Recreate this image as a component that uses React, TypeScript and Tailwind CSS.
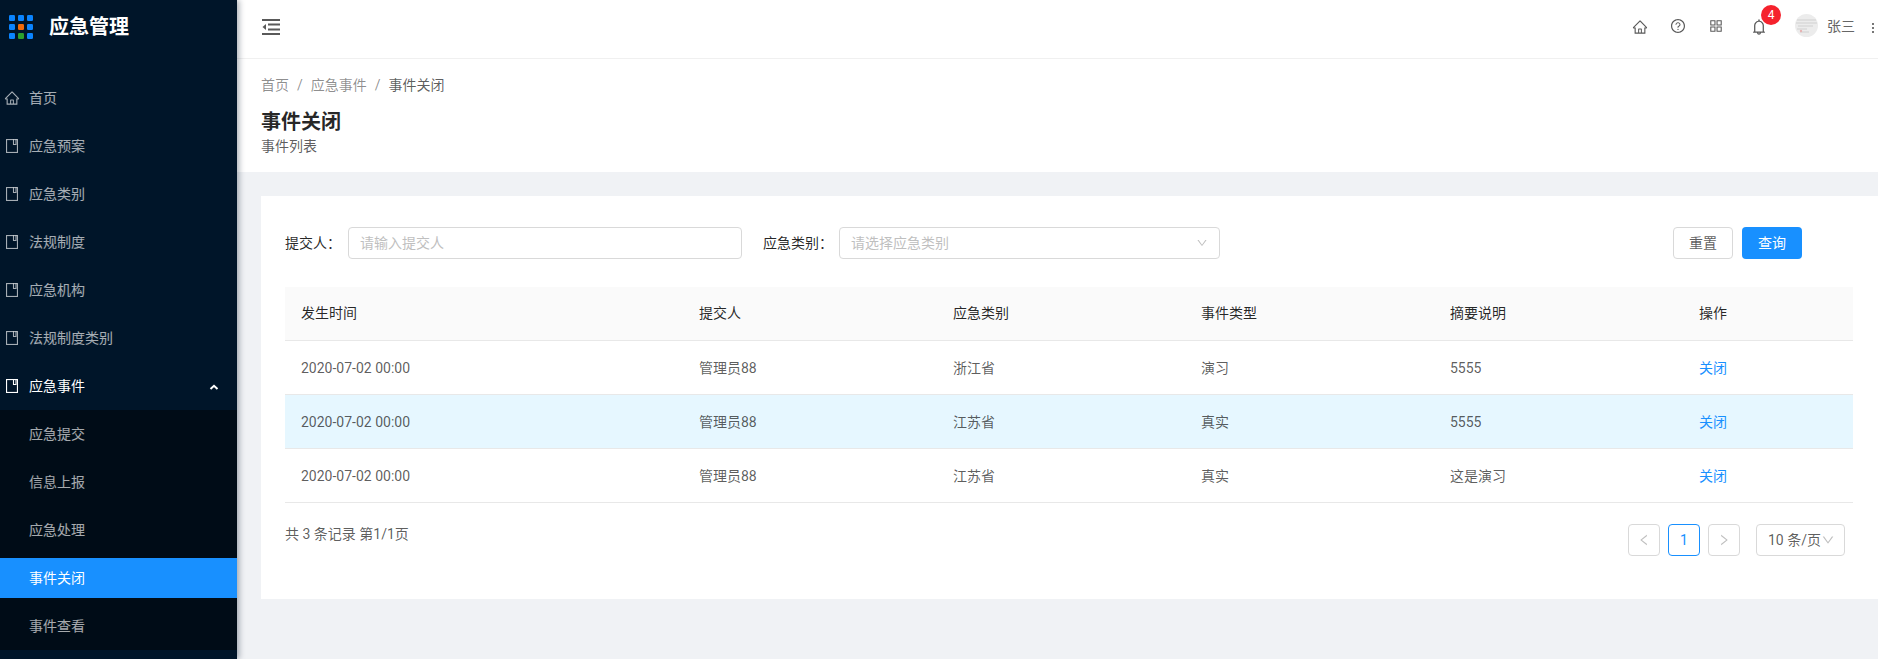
import React from "react";
import { AiOutlineHome, AiOutlineQuestionCircle, AiOutlineAppstore, AiOutlineBell, AiOutlineLeft, AiOutlineRight, AiOutlineDown } from "react-icons/ai";

const Logo = () => (
  <svg width="24" height="24" viewBox="0 0 24 24" className="shrink-0">
    {[0, 9, 18].map((y) =>
      [0, 9, 18].map((x) => (
        <rect
          key={`${x}-${y}`}
          x={x}
          y={y}
          width="6"
          height="6"
          rx="1.2"
          fill={x === 9 && y === 9 ? "#f26a0a" : x === 9 && y === 18 ? "#2ca02c" : "#0a84ff"}
        />
      ))
    )}
  </svg>
);

const Book = () => (
  <span className="w-4 flex justify-center shrink-0">
    <svg width="12" height="14" viewBox="0 0 12 14" fill="none" stroke="currentColor" strokeWidth="1.1">
      <rect x="0.55" y="0.55" width="10.9" height="12.9" />
      <path d="M7.5 0.5V5.5H10V0.5" />
    </svg>
  </span>
);

const top = ["应急预案", "应急类别", "法规制度", "应急机构", "法规制度类别"];
const sub = ["应急提交", "信息上报", "应急处理", "事件关闭", "事件查看"];

const rows = [
  ["2020-07-02 00:00", "管理员88", "浙江省", "演习", "5555"],
  ["2020-07-02 00:00", "管理员88", "江苏省", "真实", "5555"],
  ["2020-07-02 00:00", "管理员88", "江苏省", "真实", "这是演习"],
];
const heads = ["发生时间", "提交人", "应急类别", "事件类型", "摘要说明", "操作"];

function Sidebar() {
  return (
    <aside className="w-[237px] h-[659px] shrink-0 bg-[#001529] text-white/65 shadow-[2px_0_6px_rgba(0,21,41,0.35)] z-10 overflow-hidden">
      <div className="h-[54px] flex items-center pl-[9px] gap-4">
        <Logo />
        <span className="text-[20px] font-bold text-white leading-none">应急管理</span>
      </div>
      <div className="pt-6">
        <div className="h-10 mb-2 flex items-center pl-1 gap-[9px] text-sm">
          <AiOutlineHome className="w-4 h-4 shrink-0" />
          <span>首页</span>
        </div>
        {top.map((t) => (
          <div key={t} className="h-10 mb-2 flex items-center pl-1 gap-[9px] text-sm">
            <Book />
            <span>{t}</span>
          </div>
        ))}
        <div className="h-10 mb-1 flex items-center pl-1 gap-[9px] text-sm text-white relative">
          <Book />
          <span>应急事件</span>
          <svg className="absolute left-[209px] top-[18px]" width="10" height="6" viewBox="0 0 10 6" fill="none" stroke="#fff" strokeWidth="2">
            <path d="M1.5 5L5 1.8L8.5 5" />
          </svg>
        </div>
        <div className="bg-[#000c17] pt-1 pb-1">
          {sub.map((s, i) => (
            <div
              key={s}
              className={
                i === 3
                  ? "h-10 flex items-center pl-[29px] text-sm text-white bg-[#1890ff] mb-2"
                  : i === 4
                  ? "h-10 flex items-center pl-[29px] text-sm"
                  : "h-10 flex items-center pl-[29px] text-sm mb-2"
              }
            >
              {s}
            </div>
          ))}
        </div>
      </div>
    </aside>
  );
}

function TopBar() {
  return (
    <header className="h-[59px] shrink-0 bg-white border-b border-[#f0f0f0] flex items-center justify-between pl-[25px]">
      <svg className="-mt-[5px]" width="18" height="16" viewBox="0 0 18 16" fill="#595959">
        <rect x="0" y="0" width="18" height="2" />
        <rect x="6" y="4.5" width="12" height="2" />
        <rect x="6" y="9.5" width="12" height="2" />
        <rect x="0" y="14" width="18" height="2" />
        <path d="M0.5 8 L4 5 V11 Z" />
      </svg>
      <div className="flex items-center h-full text-[#595959] relative w-[245px] shrink-0">
        <AiOutlineHome className="absolute -left-px top-[19px] w-4 h-4" />
        <AiOutlineQuestionCircle className="absolute left-[37px] top-[18px] w-4 h-4" />
        <AiOutlineAppstore className="absolute left-[75px] top-[18px] w-4 h-4" />
        <AiOutlineBell className="absolute left-[117px] top-[18px] w-[18px] h-[18px]" />
        <span className="absolute left-[128px] top-[5px] w-5 h-5 rounded-full bg-[#f5222d] text-white text-xs flex items-center justify-center">4</span>
        <svg className="absolute left-[162px] top-[14px]" width="23" height="23" viewBox="0 0 23 23">
          <circle cx="11.5" cy="11.5" r="11.5" fill="#ececec" />
          <path d="M2 6h19M1 9h21M3 12h15M2 15h10M5 18h9" stroke="#cfcfcf" strokeWidth="1.2" />
          <circle cx="6" cy="17" r="1.2" fill="#e6b3b3" />
        </svg>
        <span className="absolute left-[194px] top-[15px] text-sm text-[#666] leading-[22px]">张三</span>
        <span className="absolute left-[239px] top-[23px] flex flex-col gap-[2px]">
          <i className="w-[2px] h-[2px] bg-[#777] block" />
          <i className="w-[2px] h-[2px] bg-[#777] block" />
          <i className="w-[2px] h-[2px] bg-[#777] block" />
        </span>
      </div>
    </header>
  );
}

function Filters() {
  return (
    <div className="flex items-center h-8 text-sm">
      <span className="w-[63px] shrink-0 text-black/85">提交人：</span>
      <div className="w-[394px] h-8 border border-[#d9d9d9] rounded flex items-center pl-[11px] text-[#bfbfbf]">请输入提交人</div>
      <span className="ml-[20px] pl-px w-[77px] shrink-0 text-black/85">应急类别：</span>
      <div className="w-[381px] h-8 border border-[#d9d9d9] rounded flex items-center justify-between pl-[11px] pr-[11px] text-[#bfbfbf]">
        <span>请选择应急类别</span>
        <AiOutlineDown className="w-3 h-3" />
      </div>
      <div className="ml-auto flex gap-[9px] pr-[76px]">
        <button className="w-[60px] h-8 border border-[#d9d9d9] rounded text-black/65 bg-white">重置</button>
        <button className="w-[60px] h-8 rounded text-white bg-[#1890ff]">查询</button>
      </div>
    </div>
  );
}

function DataTable() {
  return (
    <table className="w-[1568px] table-fixed border-collapse text-sm mt-[28px]">
      <colgroup>
        <col className="w-[398px]" />
        <col className="w-[254px]" />
        <col className="w-[248px]" />
        <col className="w-[249px]" />
        <col className="w-[249px]" />
        <col className="w-[170px]" />
      </colgroup>
      <thead>
        <tr className="h-[53px] bg-[#fafafa] border-b border-[#e8e8e8]">
          {heads.map((h) => (
            <th key={h} className="px-4 text-left font-normal text-black/85">{h}</th>
          ))}
        </tr>
      </thead>
      <tbody>
        {rows.map((r, i) => (
          <tr key={i} className={i === 1 ? "h-[54px] bg-[#e6f7ff] border-b border-[#e8e8e8]" : "h-[54px] border-b border-[#e8e8e8]"}>
            {r.map((c, j) => (
              <td key={j} className="px-4 pt-px text-black/65">{c}</td>
            ))}
            <td className="px-4 pt-px text-[#1890ff]">关闭</td>
          </tr>
        ))}
      </tbody>
    </table>
  );
}

function Pager() {
  return (
    <div className="flex items-center justify-between h-8 mt-[21px] w-[1560px] text-sm">
      <span className="text-black/65 self-start leading-[22px] -mt-px">共 3 条记录 第1/1页</span>
      <div className="flex items-center gap-2">
        <span className="w-8 h-8 border border-[#d9d9d9] rounded flex items-center justify-center text-[#bfbfbf]">
          <AiOutlineLeft className="w-3.5 h-3.5" />
        </span>
        <span className="w-8 h-8 border border-[#1890ff] rounded flex items-center justify-center text-[#1890ff]">1</span>
        <span className="w-8 h-8 border border-[#d9d9d9] rounded flex items-center justify-center text-[#bfbfbf]">
          <AiOutlineRight className="w-3.5 h-3.5" />
        </span>
        <span className="ml-2 w-[89px] h-8 border border-[#d9d9d9] rounded flex items-center pl-[11px] text-black/65 whitespace-nowrap">
          10 条/页
          <AiOutlineDown className="w-3.5 h-3.5 text-[#bfbfbf] shrink-0" />
        </span>
      </div>
    </div>
  );
}

export default function App() {
  return (
    <div className="w-[1878px] h-[659px] flex overflow-hidden bg-[#f0f2f5] [font-family:Roboto,'Noto_Sans_CJK_SC',sans-serif]">
      <Sidebar />
      <main className="flex-1 min-w-0 flex flex-col">
        <TopBar />
        <section className="h-[113px] shrink-0 bg-white pl-6 pt-4">
          <div className="flex items-center text-sm leading-5 text-black/45">
            <span>首页</span>
            <span className="mx-2">/</span>
            <span>应急事件</span>
            <span className="mx-2">/</span>
            <span className="text-black/65">事件关闭</span>
          </div>
          <h1 className="mt-[13px] text-[20px] leading-7 font-bold text-black/85">事件关闭</h1>
          <p className="text-sm leading-[20px] text-black/65">事件列表</p>
        </section>
        <section className="mt-6 ml-6 bg-white pt-[31px] pl-6 pb-[43px]">
          <Filters />
          <DataTable />
          <Pager />
        </section>
      </main>
    </div>
  );
}
